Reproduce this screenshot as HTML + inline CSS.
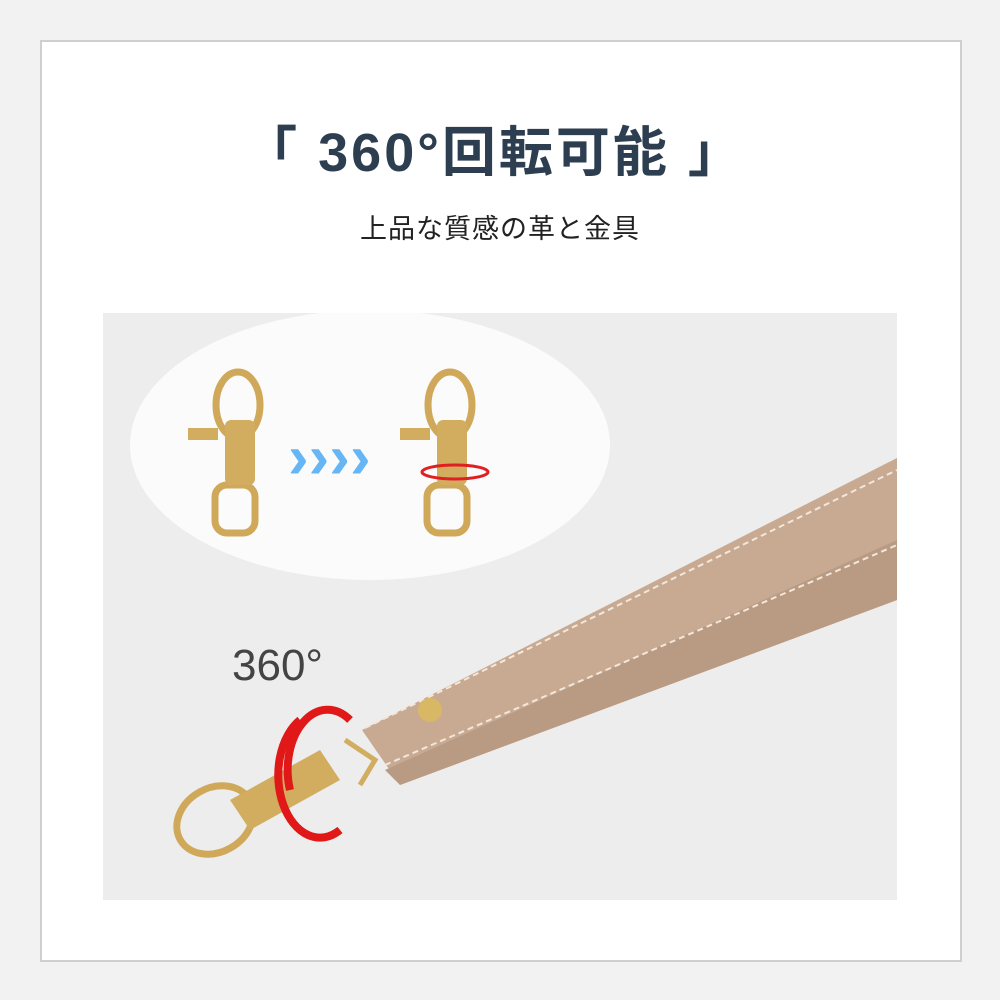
<!DOCTYPE html>
<html><head><meta charset="utf-8"><style>
body{margin:0;width:1000px;height:1000px;background:#f2f2f2;position:relative;overflow:hidden;font-family:"Liberation Sans","Noto Sans CJK JP",sans-serif}
.panel{position:absolute;left:40px;top:40px;width:918px;height:918px;background:#fff;border:2px solid #cfcfcf}
.t{position:absolute;top:108px;left:-6px;width:1000px;text-align:center;font-size:54px;font-weight:bold;color:#2c3e50;letter-spacing:3px}
.s{position:absolute;top:207px;left:0;width:1000px;text-align:center;font-size:27px;color:#222;letter-spacing:1px}
.photo{position:absolute;left:103px;top:313px;width:794px;height:587px;background:#ededed;overflow:hidden}
</style></head><body>
<div class="panel"></div>
<div class="t">「 360°回転可能 」</div>
<div class="s">上品な質感の革と金具</div>
<div class="photo">
<svg width="794" height="587" viewBox="103 313 794 587">
<ellipse cx="370" cy="445" rx="240" ry="135" fill="#fbfbfb"/>
<polygon points="362,730 897,458 897,600 400,785" fill="#c8aa92"/>
<polygon points="385,770 897,540 897,600 400,785" fill="#b99b83"/>
<path d="M365,728 L897,470" stroke="#f3e6da" stroke-width="2" stroke-dasharray="6 4"/>
<path d="M385,765 L897,545" stroke="#f3e6da" stroke-width="2" stroke-dasharray="6 4"/>
<circle cx="430" cy="710" r="12" fill="#d8b865"/>
<path d="M345,740 L375,760 L360,785" fill="none" stroke="#d2ad60" stroke-width="5"/>
<g fill="none" stroke="#cfa85a" stroke-width="7">
<ellipse cx="238" cy="405" rx="22" ry="33"/><rect x="215" y="485" width="40" height="48" rx="12"/>
<ellipse cx="450" cy="405" rx="22" ry="33"/><rect x="427" y="485" width="40" height="48" rx="12"/>
<ellipse cx="215" cy="820" rx="40" ry="32" transform="rotate(-30 215 820)"/>
</g>
<g fill="#d2ad60"><rect x="225" y="420" width="30" height="65" rx="6"/><rect x="437" y="420" width="30" height="65" rx="6"/>
<rect x="188" y="428" width="30" height="12"/><rect x="400" y="428" width="30" height="12"/>
<polygon points="230,800 320,750 340,780 250,830"/></g>
<text x="288" y="478" font-size="62" font-weight="bold" fill="#66b6f5">››››</text>
<ellipse cx="455" cy="472" rx="33" ry="7" fill="none" stroke="#e02020" stroke-width="3"/>
<path d="M300,720 A40,60 0 0 0 340,830" fill="none" stroke="#e01818" stroke-width="8"/>
<path d="M290,790 A40,60 0 0 1 350,720" fill="none" stroke="#e01818" stroke-width="8"/>
<text x="232" y="680" font-size="44" fill="#444" font-family="Liberation Sans">360°</text>
</svg>
</div>
</body></html>
